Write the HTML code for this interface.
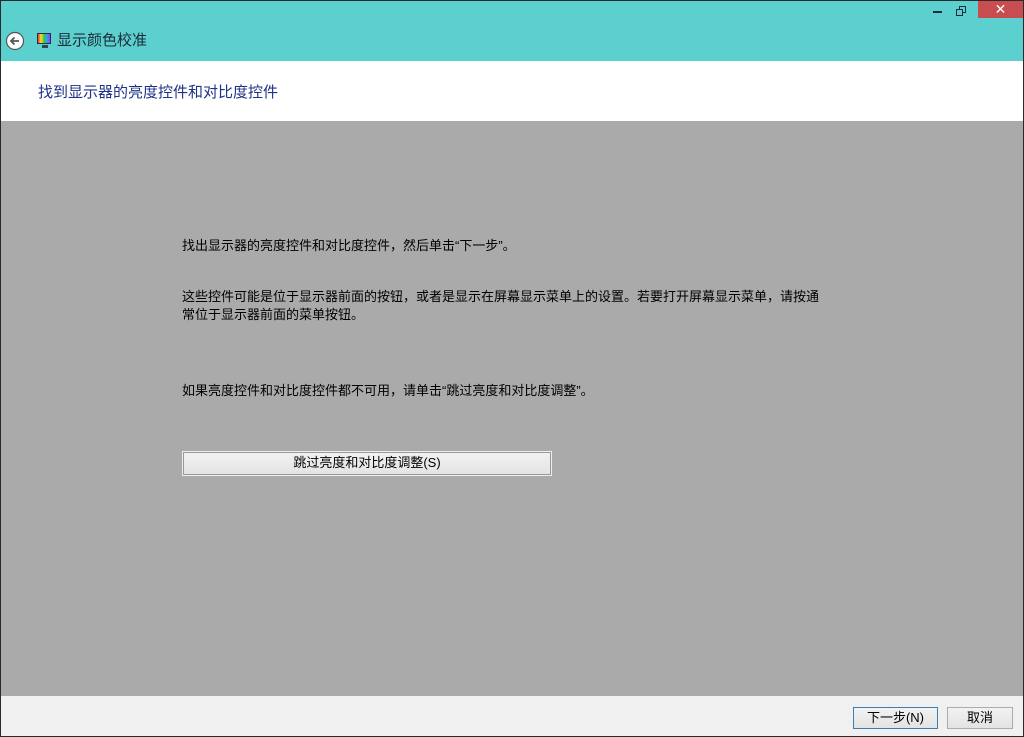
<!DOCTYPE html>
<html><head><meta charset="utf-8"><style>
*{margin:0;padding:0;box-sizing:border-box}
body{width:1024px;height:737px;overflow:hidden;background:#2a2a2a;font-family:"Liberation Sans","Noto Sans CJK SC",sans-serif;position:relative}
.win{position:absolute;left:1px;top:1px;width:1022px;height:735px;background:#aaaaaa}
.title{position:absolute;left:0;top:0;width:1022px;height:60px;background:#5ccfcf}
.head{position:absolute;left:0;top:60px;width:1022px;height:60px;background:#fff}
.foot{position:absolute;left:0;top:695px;width:1022px;height:40px;background:#f0f0f0}
.t{position:absolute;font-size:13px;color:#000;white-space:nowrap}
.btn{position:absolute;background:linear-gradient(#f2f2f2,#e3e3e3);border:1px solid #acacac;font-size:13px;text-align:center;color:#000}
</style></head><body>
<div class="win">
<div class="title">
 <svg style="position:absolute;left:4px;top:30px" width="20" height="20"><circle cx="10" cy="10" r="8.5" fill="#fff" stroke="#555" stroke-width="1.2"/><path d="M14 10H6M9.5 6.5L6 10l3.5 3.5" stroke="#555" stroke-width="1.8" fill="none"/></svg>
 <div style="position:absolute;left:36px;top:32px;width:14px;height:11px;background:linear-gradient(90deg,#e33,#fd3,#3c3,#39f,#a3f);border:1px solid #234"></div>
 <div style="position:absolute;left:41px;top:44px;width:6px;height:3px;background:#345"></div>
 <div class="t" style="left:56px;top:28px;font-size:15px;color:#1d2b3a">显示颜色校准</div>
 <div style="position:absolute;left:932px;top:10px;width:9px;height:2px;background:#1d2b3a"></div>
 <div style="position:absolute;left:958px;top:5px;width:7px;height:7px;border:1.5px solid #1d2b3a"></div>
 <div style="position:absolute;left:955px;top:8px;width:7px;height:7px;border:1.5px solid #1d2b3a;background:#5ccfcf"></div>
 <div style="position:absolute;left:977px;top:0;width:45px;height:17px;background:#c74d50;color:#fff;font-size:14px;text-align:center;line-height:16px">✕</div>
</div>
<div class="head"><div class="t" style="left:37px;top:20px;font-size:15px;color:#1e3287">找到显示器的亮度控件和对比度控件</div></div>
<div class="t" style="left:181px;top:234px">找出显示器的亮度控件和对比度控件，然后单击“下一步”。</div>
<div class="t" style="left:181px;top:285px">这些控件可能是位于显示器前面的按钮，或者是显示在屏幕显示菜单上的设置。若要打开屏幕显示菜单，请按通</div>
<div class="t" style="left:181px;top:303px">常位于显示器前面的菜单按钮。</div>
<div class="t" style="left:181px;top:379px">如果亮度控件和对比度控件都不可用，请单击“跳过亮度和对比度调整”。</div>
<div class="btn" style="left:181px;top:450px;width:370px;height:25px;line-height:22px;border:1px solid #eee;outline:1px solid #999;outline-offset:-2px">跳过亮度和对比度调整(S)</div>
<div class="foot">
 <div class="btn" style="left:852px;top:11px;width:85px;height:22px;line-height:20px;border-color:#3c7fb1">下一步(N)</div>
 <div class="btn" style="left:946px;top:11px;width:66px;height:22px;line-height:20px">取消</div>
</div>
</div>
</body></html>
